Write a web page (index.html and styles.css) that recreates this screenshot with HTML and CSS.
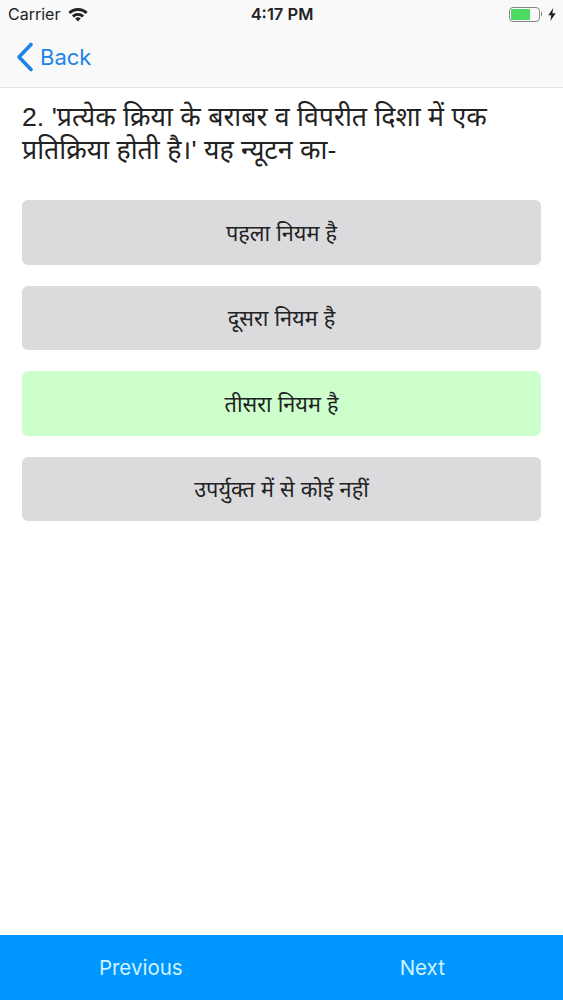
FILE: index.html
```html
<!DOCTYPE html>
<html lang="hi">
<head>
    <meta charset="UTF-8">
    <meta name="viewport" content="width=device-width, initial-scale=1.0">
    <title>Quiz</title>
    <link rel="stylesheet" href="styles.css">
</head>
<body>

    <div class="screen">
        <header class="top-bar">
            <div class="status-bar">
                <div class="status-left">
                    <span class="carrier">Carrier</span>
                    <svg class="wifi" width="20" height="15" viewBox="0 0 20 15">
                        <path d="M0.3 5 A13.8 13.8 0 0 1 19.7 5 L17.6 7.1 A10.8 10.8 0 0 0 2.4 7.1 Z" fill="#222"/>
                        <path d="M3.9 8.4 A8.7 8.7 0 0 1 16.1 8.4 L14 10.5 A5.7 5.7 0 0 0 6 10.5 Z" fill="#222"/>
                        <path d="M7.2 11.6 A4 4 0 0 1 12.8 11.6 L10 14.6 Z" fill="#222"/>
                    </svg>
                </div>
                <span class="clock">4:17 PM</span>
                <div class="status-right">
                    <div class="battery"><div class="battery-level"></div></div>
                    <div class="battery-tip"></div>
                    <svg class="bolt" width="8" height="13" viewBox="0 0 8 13">
                        <path d="M5.2 0 L0.3 7.3 H3.2 L2.4 13 L7.7 5.3 H4.4 Z" fill="#222"/>
                    </svg>
                </div>
            </div>
            <nav class="nav-bar">
                <a href="#" class="back-button">
                    <svg width="18" height="30" viewBox="0 0 18 30">
                        <path d="M15 2.5 L3 15 L15 27.5" fill="none" stroke="#1c84e8" stroke-width="3.6" stroke-linecap="round" stroke-linejoin="round"/>
                    </svg>
                    <span>Back</span>
                </a>
            </nav>
        </header>

        <main class="quiz">
            <h2 class="question">2. 'प्रत्येक क्रिया के बराबर व विपरीत दिशा में एक प्रतिक्रिया होती है।' यह न्यूटन का-</h2>
            <div class="options">
                <button type="button" class="option">पहला नियम है</button>
                <button type="button" class="option">दूसरा नियम है</button>
                <button type="button" class="option correct">तीसरा नियम है</button>
                <button type="button" class="option">उपर्युक्त में से कोई नहीं</button>
            </div>
        </main>

        <footer class="pager">
            <button type="button">Previous</button>
            <button type="button">Next</button>
        </footer>
    </div>

</body>
</html>
```

FILE: styles.css
```css
body {
    font-family: "Liberation Sans", "Noto Sans", sans-serif;
    background-color: #fff;
    margin: 0;
    padding: 0;
}
.screen {
    display: flex;
    flex-direction: column;
    height: 1000px;
}
.top-bar {
    background-color: #f9f9fa;
    border-bottom: 1px solid #e2e2e2;
    height: 87px;
    flex-shrink: 0;
}
.status-bar {
    display: flex;
    justify-content: space-between;
    align-items: center;
    height: 28px;
    padding: 0 7px 0 8px;
    color: #222;
    font-family: Inter, "Liberation Sans", sans-serif;
    font-size: 16px;
}
.status-left {
    display: flex;
    align-items: center;
    gap: 8px;
    flex: 1;
}
.clock {
    font-size: 16.5px;
    font-weight: 600;
}
.status-right {
    display: flex;
    align-items: center;
    justify-content: flex-end;
    flex: 1;
}
.battery {
    width: 27px;
    height: 11px;
    padding: 1px;
    border: 1px solid #888;
    border-radius: 4px;
}
.battery-level {
    width: 19px;
    height: 100%;
    background-color: #4cd964;
    border-radius: 1px;
}
.battery-tip {
    width: 1px;
    height: 4px;
    margin: 0 6px 0 1px;
    background-color: #888;
}
.nav-bar {
    display: flex;
    align-items: center;
    height: 58px;
}
.back-button {
    display: flex;
    align-items: center;
    gap: 6px;
    padding-left: 16px;
    color: #1c84e8;
    text-decoration: none;
    font-family: Inter, "Liberation Sans", sans-serif;
    font-size: 22px;
}
.quiz {
    flex: 1;
    padding: 13px 22px 0;
}
.question {
    margin: 0 0 33px;
    font-size: 26.7px;
    font-weight: 400;
    line-height: 33px;
    color: #222;
}
.options {
    display: flex;
    flex-direction: column;
    gap: 21px;
}
.option {
    height: 64.5px;
    background-color: #dbdadd;
    border: none;
    border-radius: 6px;
    color: #222;
    font-family: inherit;
    font-size: 21.7px;
    cursor: pointer;
}
.option.correct {
    background-color: #ccffcc;
}
.pager {
    display: flex;
    height: 65px;
    flex-shrink: 0;
    background-color: #0096ff;
}
.pager button {
    flex: 1;
    background: none;
    border: none;
    color: #d2f2ff;
    font-family: Inter, "Liberation Sans", sans-serif;
    font-size: 20.5px;
    cursor: pointer;
}
```
